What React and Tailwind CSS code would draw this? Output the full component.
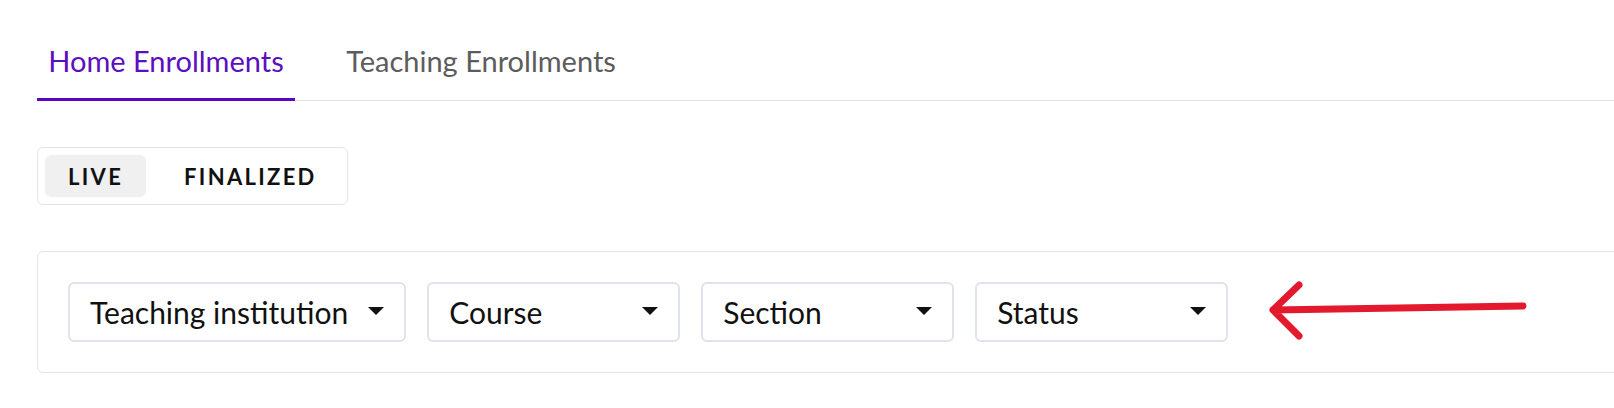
import React from "react";

const tabs = [
  { label: "Home Enrollments", width: "w-[258px]", active: true },
  { label: "Teaching Enrollments", width: "w-[296px]", active: false },
];

const filters = ["Teaching institution", "Course", "Section", "Status"];

const Caret = () => (
  <svg width="16" height="8" viewBox="0 0 16 8" className="shrink-0 -mt-[3px]">
    <path d="M0 0h16L8 8z" fill="#111" />
  </svg>
);

const FilterSelect = ({ label }) => (
  <button className="flex items-center justify-between gap-[20px] h-[60px] min-w-[253px] pl-[20px] pr-[20px] border-2 border-[#dfe3ec] rounded-md bg-white text-[30px] text-[#111]">
    <span className="leading-[36px] whitespace-nowrap">{label}</span>
    <Caret />
  </button>
);

export default function App() {
  return (
    <div className="relative min-h-screen bg-white overflow-hidden font-['Lato',sans-serif]">
      <div className="pl-[37px] pt-[31px] mr-[-1px]">
        {/* Tabs */}
        <div className="flex gap-[38px] border-b border-[#e2e1ef]">
          {tabs.map((tab) => (
            <button
              key={tab.label}
              className={`${tab.width} -mb-px pt-3 pb-[19px] text-center text-[29px] leading-[36px] border-b-[3px] ${
                tab.active
                  ? "text-[#5b0fbe] border-[#5a06bf]"
                  : "text-[#5c5c5c] border-transparent"
              }`}
            >
              {tab.label}
            </button>
          ))}
        </div>

        {/* Live / Finalized toggle */}
        <div className="mt-[46px] inline-flex gap-[15px] p-[7px] border border-[#e3e3ec] rounded-md">
          <button className="h-[42px] px-[23px] rounded-md bg-[#f0f0f0] text-[22px] font-bold tracking-[2.3px] text-[#111]">
            LIVE
          </button>
          <button className="h-[42px] px-[23px] rounded-md text-[22px] font-bold tracking-[2.3px] text-[#111]">
            FINALIZED
          </button>
        </div>

        {/* Filters */}
        <div className="mt-[46px] mr-[-20px] border border-[#e3e5ec] rounded-md pl-[30px] pt-[30px] pb-[30px]">
          <div className="flex gap-[21px]">
            {filters.map((f) => (
              <FilterSelect key={f} label={f} />
            ))}
          </div>
        </div>
      </div>

      {/* Annotation arrow */}
      <svg
        className="absolute left-[1262px] top-[278px]"
        width="270"
        height="66"
        viewBox="0 0 270 66"
      >
        <path
          d="M37 7L11 32L37 58M11 32L261 28"
          fill="none"
          stroke="#e3192e"
          strokeWidth="7"
          strokeLinecap="round"
          strokeLinejoin="round"
        />
      </svg>
    </div>
  );
}
